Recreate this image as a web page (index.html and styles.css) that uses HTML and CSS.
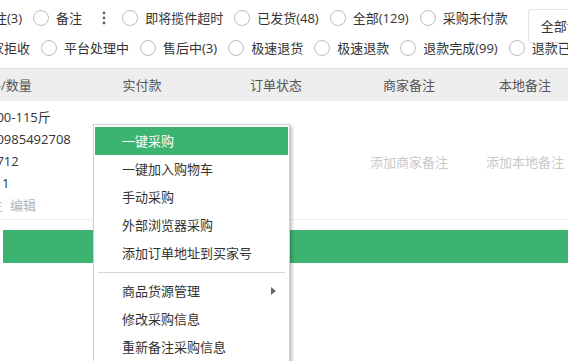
FILE: index.html
```html
<!DOCTYPE html>
<html lang="zh-CN">
<head>
<meta charset="utf-8">
<title>订单</title>
<link rel="stylesheet" href="styles.css">
</head>
<body>
<div class="page">
  <div class="filters">
    <div class="frow frow1">
      <label class="opt"><i class="radio"></i><span>有备注(3)</span></label>
      <label class="opt"><i class="radio"></i><span>备注</span></label>
      <svg class="more" width="4" height="14" viewBox="0 0 4 14"><circle cx="2" cy="2" r="1.4" fill="#666"/><circle cx="2" cy="7" r="1.4" fill="#666"/><circle cx="2" cy="12" r="1.4" fill="#666"/></svg>
      <label class="opt"><i class="radio"></i><span>即将揽件超时</span></label>
      <label class="opt"><i class="radio"></i><span>已发货(48)</span></label>
      <label class="opt"><i class="radio"></i><span>全部(129)</span></label>
      <label class="opt"><i class="radio"></i><span>采购未付款</span></label>
      <div class="select">全部订单</div>
    </div>
    <div class="frow frow2">
      <label class="opt"><i class="radio"></i><span>买家拒收</span></label>
      <label class="opt"><i class="radio"></i><span>平台处理中</span></label>
      <label class="opt"><i class="radio"></i><span>售后中(3)</span></label>
      <label class="opt"><i class="radio"></i><span>极速退货</span></label>
      <label class="opt"><i class="radio"></i><span>极速退款</span></label>
      <label class="opt"><i class="radio"></i><span>退款完成(99)</span></label>
      <label class="opt"><i class="radio"></i><span>退款已关闭</span></label>
    </div>
  </div>

  <div class="thead">
    <div class="th first">规格/数量</div>
    <div class="th">实付款</div>
    <div class="th">订单状态</div>
    <div class="th">商家备注</div>
    <div class="th">本地备注</div>
  </div>

  <div class="tbody">
    <div class="td lines">
      <div>100-115斤</div>
      <div>10985492708</div>
      <div>5712</div>
      <div><span class="q">×</span>1</div>
      <div class="edit"><span class="link">注</span>编辑</div>
    </div>
    <div class="td"></div>
    <div class="td"></div>
    <div class="td placeholder">添加商家备注</div>
    <div class="td placeholder">添加本地备注</div>
  </div>

  <div class="greenbar"></div>

  <div class="menu">
    <div class="mi active">一键采购</div>
    <div class="mi">一键加入购物车</div>
    <div class="mi">手动采购</div>
    <div class="mi">外部浏览器采购</div>
    <div class="mi">添加订单地址到买家号</div>
    <div class="sep"></div>
    <div class="mi">商品货源管理<i class="arrow"></i></div>
    <div class="mi">修改采购信息</div>
    <div class="mi">重新备注采购信息</div>
    <div class="mi">取消采购</div>
  </div>
</div>
</body>
</html>
```

FILE: styles.css
```css
html, body {
  margin: 0;
  padding: 0;
  background: #fff;
}
body {
  font-family: "Open Sans", "Noto Sans CJK SC", sans-serif;
  font-size: 13px;
  color: #333;
  overflow: hidden;
}
.page {
  position: relative;
  width: 568px;
  height: 361px;
  overflow: hidden;
}

/* filters */
.filters {
  box-sizing: border-box;
  height: 68px;
  padding-top: 9px;
}
.frow {
  display: flex;
  align-items: flex-start;
  white-space: nowrap;
}
.frow1 {
  margin-left: -55px;
}
.frow2 {
  margin-left: -45px;
  margin-top: 12px;
}
.opt {
  display: flex;
  align-items: center;
  flex: none;
  height: 18px;
  line-height: 18px;
  margin-right: 11px;
  color: #333;
}
.radio {
  display: block;
  box-sizing: border-box;
  width: 16px;
  height: 16px;
  border: 1px solid #bdbdbd;
  border-radius: 50%;
  background: #fff;
  margin-right: 7px;
  flex: none;
}
.more {
  flex: none;
  margin: 2px 16px 0 9px;
}
.select {
  flex: none;
  box-sizing: border-box;
  height: 34px;
  margin-bottom: -16px;
  margin-left: 9px;
  padding: 0 12px;
  line-height: 32px;
  border: 1px solid #e2e2e2;
  border-radius: 3px;
  background: #fff;
}

/* table */
.thead,
.tbody {
  display: grid;
  grid-template-columns: 93px 120px 148px 118px 114px;
  margin-left: -11px;
}
.thead {
  box-sizing: border-box;
  height: 33px;
  line-height: 32px;
  border-top: 1px solid #dedede;
  background: #eeeeee;
  color: #555;
}
.th {
  text-align: center;
  white-space: nowrap;
}
.th.first {
  text-align: left;
  text-indent: -14px;
}
.tbody {
  padding: 5px 0 3px;
  border-bottom: 1px solid #eeeeee;
}
.lines {
  line-height: 22px;
  white-space: nowrap;
}
.q {
  display: inline-block;
  width: 13px;
  font-family: "Noto Sans CJK SC", sans-serif;
}
.edit {
  color: #b5b5b5;
}
.link {
  color: #9fb8d6;
  margin-right: 8px;
}
.placeholder {
  display: flex;
  align-items: center;
  justify-content: center;
  color: #c9c9c9;
  white-space: nowrap;
}

.greenbar {
  height: 33px;
  margin: 10px 0 0 3px;
  background: #3cb371;
}

/* context menu */
.menu {
  position: absolute;
  left: 93px;
  top: 124px;
  box-sizing: border-box;
  width: 197px;
  padding: 2px 1px;
  background: #fff;
  border: 1px solid #d0d0d0;
  box-shadow: 2px 2px 3px rgba(0, 0, 0, 0.25);
}
.mi {
  position: relative;
  height: 28px;
  line-height: 28px;
  padding-left: 27px;
  color: #333;
  white-space: nowrap;
}
.mi.active {
  background: #3cb371;
  color: #fff;
}
.sep {
  height: 1px;
  margin: 5px 3px 4px;
  background: #cfd8dc;
}
.arrow {
  position: absolute;
  right: 12px;
  top: 10px;
  width: 0;
  height: 0;
  border-left: 5px solid #666;
  border-top: 4px solid transparent;
  border-bottom: 4px solid transparent;
}
```
